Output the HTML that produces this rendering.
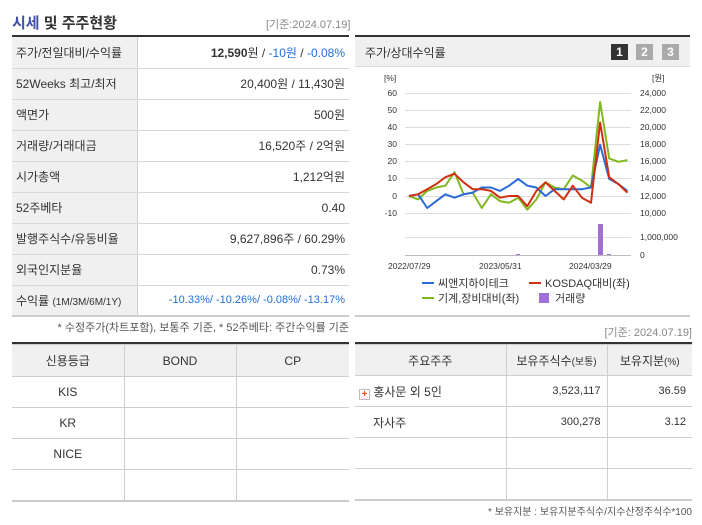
<!DOCTYPE html>
<html><head><meta charset="utf-8"><style>
*{margin:0;padding:0;box-sizing:border-box}
body{width:702px;height:525px;background:#fff;font-family:"Liberation Sans","Noto Sans CJK KR",sans-serif;color:#333;position:relative;overflow:hidden}
.a{position:absolute;white-space:nowrap}
table{border-collapse:collapse;position:absolute;font-size:12px}
td{border-bottom:1px solid #d8d8d8}
.l td.k{background:#f0f0f0;border-right:1px solid #d0d0d0;padding-left:4px;width:125px}
.l td.v{text-align:right;padding-right:4px}
.g td,.g th{border:1px solid #cfcfcf;text-align:center;font-weight:normal}
.g th{background:#f0f0f0}
</style></head><body>
<div class="a" style="left:12px;top:12px;font-size:15px;font-weight:bold;color:#333"><span style="color:#4050a8">시세</span> 및 주주현황</div>
<div class="a" style="left:266px;top:16px;font-size:11px;color:#888">[기준:2024.07.19]</div>
<div class="a" style="left:12px;top:35px;width:337px;height:2px;background:#333"></div>
<table class="l" style="left:12px;top:37px;width:337px">
<tr style="height:31px"><td class="k">주가/전일대비/수익률</td><td class="v"><b>12,590</b>원 / <span style="color:#1e6fd9">-10원</span> / <span style="color:#1e6fd9">-0.08%</span></td></tr>
<tr style="height:31px"><td class="k">52Weeks 최고/최저</td><td class="v">20,400원 / 11,430원</td></tr>
<tr style="height:31px"><td class="k">액면가</td><td class="v">500원</td></tr>
<tr style="height:31px"><td class="k">거래량/거래대금</td><td class="v">16,520주 / 2억원</td></tr>
<tr style="height:31px"><td class="k">시가총액</td><td class="v">1,212억원</td></tr>
<tr style="height:31px"><td class="k">52주베타</td><td class="v">0.40</td></tr>
<tr style="height:31px"><td class="k">발행주식수/유동비율</td><td class="v">9,627,896주 / 60.29%</td></tr>
<tr style="height:31px"><td class="k">외국인지분율</td><td class="v">0.73%</td></tr>
<tr style="height:31px"><td class="k" style="border-bottom:2px solid #ccc">수익률 <span style="font-size:10px">(1M/3M/6M/1Y)</span></td><td class="v" style="color:#1e6fd9;font-size:11px;border-bottom:2px solid #ccc">-10.33%/ -10.26%/ -0.08%/ -13.17%</td></tr>
</table>
<div class="a" style="right:353px;top:319px;font-size:11px;color:#555">* 수정주가(차트포함), 보통주 기준, * 52주베타: 주간수익률 기준</div>

<div class="a" style="left:12px;top:342px;width:337px;height:2px;background:#333"></div>
<table class="g" style="left:12px;top:344px;width:337px;border-left:none">
<tr style="height:32px"><th style="width:112px;border-left:none">신용등급</th><th style="width:112px">BOND</th><th style="border-right:none">CP</th></tr>
<tr style="height:31px"><td style="border-left:none">KIS</td><td></td><td style="border-right:none"></td></tr>
<tr style="height:31px"><td style="border-left:none">KR</td><td></td><td style="border-right:none"></td></tr>
<tr style="height:31px"><td style="border-left:none">NICE</td><td></td><td style="border-right:none"></td></tr>
<tr style="height:31px"><td style="border-left:none;border-bottom:2px solid #ccc"></td><td style="border-bottom:2px solid #ccc"></td><td style="border-right:none;border-bottom:2px solid #ccc"></td></tr>
</table>

<!-- chart box -->
<div class="a" style="left:355px;top:35px;width:335px;height:2px;background:#333"></div>
<div class="a" style="left:355px;top:37px;width:335px;height:30px;background:#f0f0f0;border-bottom:1px solid #ddd"></div>
<div class="a" style="left:365px;top:44px;font-size:12px">주가/상대수익률</div>
<div class="a" style="left:611px;top:44px;width:17px;height:16px;background:#333;color:#fff;font-size:12px;font-weight:bold;text-align:center;line-height:16px">1</div>
<div class="a" style="left:636px;top:44px;width:17px;height:16px;background:#aaa;color:#fff;font-size:12px;font-weight:bold;text-align:center;line-height:16px">2</div>
<div class="a" style="left:662px;top:44px;width:17px;height:16px;background:#aaa;color:#fff;font-size:12px;font-weight:bold;text-align:center;line-height:16px">3</div>
<svg class="a" style="left:0;top:0" width="702" height="525" font-family="Liberation Sans, Noto Sans CJK KR, sans-serif" font-size="8.5" fill="#333">
<g stroke="#ddd" stroke-width="1">
<line x1="405" x2="631" y1="93.5" y2="93.5"/><line x1="405" x2="631" y1="110.5" y2="110.5"/><line x1="405" x2="631" y1="127.5" y2="127.5"/><line x1="405" x2="631" y1="144.5" y2="144.5"/><line x1="405" x2="631" y1="161.5" y2="161.5"/><line x1="405" x2="631" y1="178.5" y2="178.5"/><line x1="405" x2="631" y1="196.5" y2="196.5"/><line x1="405" x2="631" y1="213.5" y2="213.5"/><line x1="405" x2="631" y1="237.5" y2="237.5"/>
</g>
<line x1="405" x2="631" y1="255.5" y2="255.5" stroke="#bbb"/>
<text x="384" y="81">[%]</text><text x="652" y="81">[원]</text>
<g text-anchor="end"><text x="397" y="96">60</text><text x="397" y="113">50</text><text x="397" y="130">40</text><text x="397" y="147">30</text><text x="397" y="164">20</text><text x="397" y="181">10</text><text x="397" y="199">0</text><text x="397" y="216">-10</text></g>
<text x="640" y="96">24,000</text><text x="640" y="113">22,000</text><text x="640" y="130">20,000</text><text x="640" y="147">18,000</text><text x="640" y="164">16,000</text><text x="640" y="181">14,000</text><text x="640" y="199">12,000</text><text x="640" y="216">10,000</text><text x="640" y="240">1,000,000</text><text x="640" y="258">0</text>
<text x="388" y="269">2022/07/29</text><text x="479" y="269">2023/05/31</text><text x="569" y="269">2024/03/29</text>
<rect x="598" y="224" width="5" height="31" fill="#a070d8"/><rect x="516" y="254" width="4" height="1" fill="#a070d8"/><rect x="607" y="254" width="4" height="1" fill="#a070d8"/>
<g fill="none" stroke-width="2" stroke-linejoin="round">
<polyline stroke="#80b820" points="409,196 418.1,199.4 427.2,190.9 436.3,187.5 445.4,185.7 454.5,172.1 463.6,194.3 472.7,192.6 481.8,208 490.9,194.3 500,201.1 509.1,202.8 518.2,197.7 527.3,209.7 536.4,199.4 545.5,182.3 554.6,187.5 563.7,189.2 572.8,175.5 581.9,180.6 591,187.5 600.1,102 609.2,158.4 618.3,161.8 627.4,160.1"/>
<polyline stroke="#2a6ad8" points="409,196 418.1,194.3 427.2,208 436.3,201.1 445.4,194.3 454.5,197.7 463.6,194.3 472.7,192.6 481.8,187.5 490.9,187.5 500,190.9 509.1,185.7 518.2,178.9 527.3,185.7 536.4,187.5 545.5,196 554.6,189.2 563.7,189.2 572.8,189.2 581.9,189.2 591,187.5 600.1,144.7 609.2,178.9 618.3,184 627.4,190.9"/>
<polyline stroke="#d03010" points="409,196 418.1,194.3 427.2,189.2 436.3,184 445.4,177.2 454.5,173.8 463.6,182.3 472.7,189.2 481.8,189.2 490.9,190.9 500,197.7 509.1,196 518.2,196 527.3,206.3 536.4,190.9 545.5,182.3 554.6,190.9 563.7,199.4 572.8,185.7 581.9,197.7 591,202.8 600.1,122.5 609.2,177.2 618.3,184 627.4,192.6"/>
</g>
<g font-size="11">
<line x1="422" x2="434" y1="283" y2="283" stroke="#2a6ad8" stroke-width="2"/><text x="438" y="287">씨앤지하이테크</text>
<line x1="529" x2="541" y1="283" y2="283" stroke="#d03010" stroke-width="2"/><text x="545" y="287">KOSDAQ대비(좌)</text>
<line x1="422" x2="434" y1="298" y2="298" stroke="#80b820" stroke-width="2"/><text x="438" y="302">기계,장비대비(좌)</text>
<rect x="539" y="293" width="10" height="10" fill="#a070d8"/><text x="555" y="302">거래량</text>
</g>
</svg>
<div class="a" style="left:355px;top:315px;width:335px;height:2px;background:#ccc"></div>
<div class="a" style="right:10px;top:324px;font-size:11px;color:#888">[기준: 2024.07.19]</div>
<div class="a" style="left:355px;top:342px;width:337px;height:2px;background:#333"></div>
<table class="g" style="left:355px;top:344px;width:337px">
<tr style="height:31px"><th style="width:151px;border-left:none">주요주주</th><th style="width:101px">보유주식수<span style="font-size:10px">(보통)</span></th><th style="border-right:none">보유지분<span style="font-size:10px">(%)</span></th></tr>
<tr style="height:31px"><td style="border-left:none;text-align:left;padding-left:4px"><span style="display:inline-block;width:11px;height:11px;border:1px solid #bbb;background:#fff;color:#e85010;font-size:10px;line-height:9px;text-align:center;font-weight:bold;vertical-align:-1px">+</span> 홍사문 외 5인</td><td style="text-align:right;padding-right:6px;font-size:11px">3,523,117</td><td style="border-right:none;text-align:right;padding-right:6px;font-size:11px">36.59</td></tr>
<tr style="height:31px"><td style="border-left:none;text-align:left;padding-left:18px">자사주</td><td style="text-align:right;padding-right:6px;font-size:11px">300,278</td><td style="border-right:none;text-align:right;padding-right:6px;font-size:11px">3.12</td></tr>
<tr style="height:31px"><td style="border-left:none"></td><td></td><td style="border-right:none"></td></tr>
<tr style="height:31px"><td style="border-left:none;border-bottom:2px solid #ccc"></td><td style="border-bottom:2px solid #ccc"></td><td style="border-right:none;border-bottom:2px solid #ccc"></td></tr>
</table>
<div class="a" style="right:10px;top:503px;font-size:10px;color:#555">* 보유지분 : 보유지분주식수/지수산정주식수*100</div>
</body></html>
